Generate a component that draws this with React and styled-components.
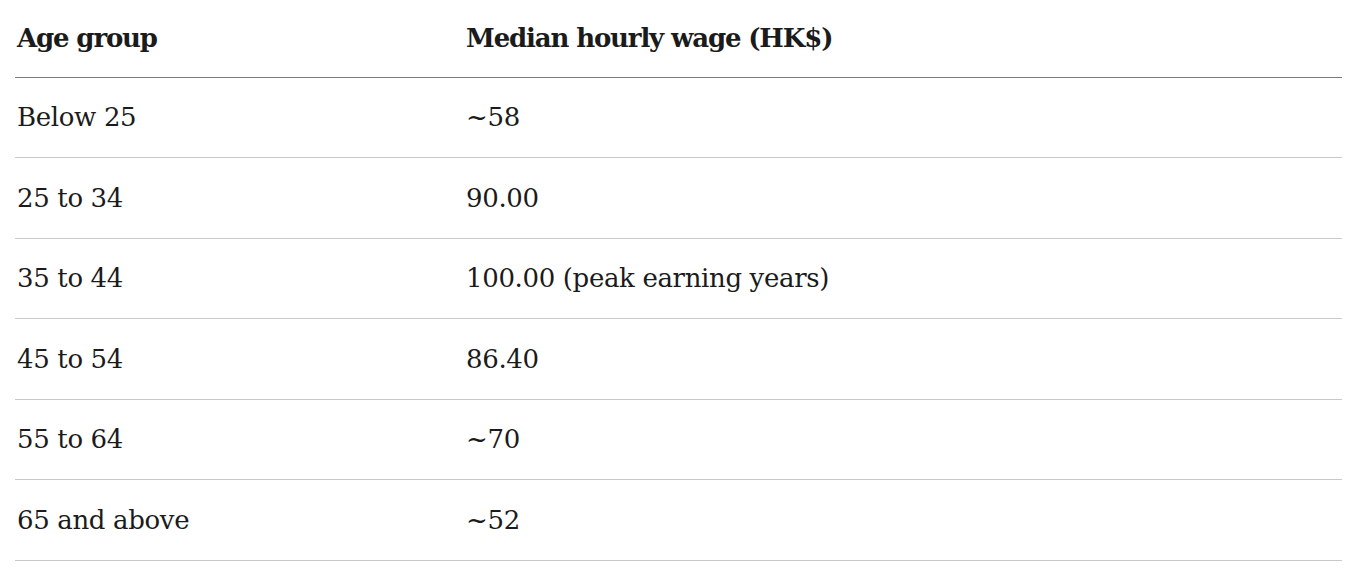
import styled, { createGlobalStyle } from "styled-components"

const GlobalStyle = createGlobalStyle`
  html, body {
    margin: 0;
    padding: 0;
    background: #fff;
  }
  body {
    font-family: "DejaVu Serif", "Liberation Serif", serif;
    color: #1b1b1b;
  }
`

const Wrap = styled.div`
  padding: 0 22px 0 15px;
`

const Table = styled.table`
  width: 100%;
  border-collapse: collapse;
  table-layout: fixed;
`

const HeadRow = styled.tr`
  height: 77px;
  border-bottom: 1px solid #7c7c7c;
`

const Row = styled.tr`
  height: 80.5px;
  border-bottom: 1px solid #c9c9c9;
`

const HeadCell = styled.th`
  text-align: left;
  font-weight: 700;
  font-size: 26px;
  letter-spacing: -1.15px;
  padding: 0 0 0 2px;
  vertical-align: middle;
  width: ${props => props.$width || "auto"};
`

const Cell = styled.td`
  font-size: 26px;
  letter-spacing: -0.35px;
  padding: 0 0 0 2px;
  vertical-align: middle;
`

const rows = [
  ["Below 25", "~58"],
  ["25 to 34", "90.00"],
  ["35 to 44", "100.00 (peak earning years)"],
  ["45 to 54", "86.40"],
  ["55 to 64", "~70"],
  ["65 and above", "~52"],
]

const App = () => (
  <Wrap>
    <GlobalStyle />
    <Table>
      <thead>
        <HeadRow>
          <HeadCell $width="447px">Age group</HeadCell>
          <HeadCell>Median hourly wage (HK$)</HeadCell>
        </HeadRow>
      </thead>
      <tbody>
        {rows.map(([age, wage]) => (
          <Row key={age}>
            <Cell>{age}</Cell>
            <Cell>{wage}</Cell>
          </Row>
        ))}
      </tbody>
    </Table>
  </Wrap>
)

export default App
